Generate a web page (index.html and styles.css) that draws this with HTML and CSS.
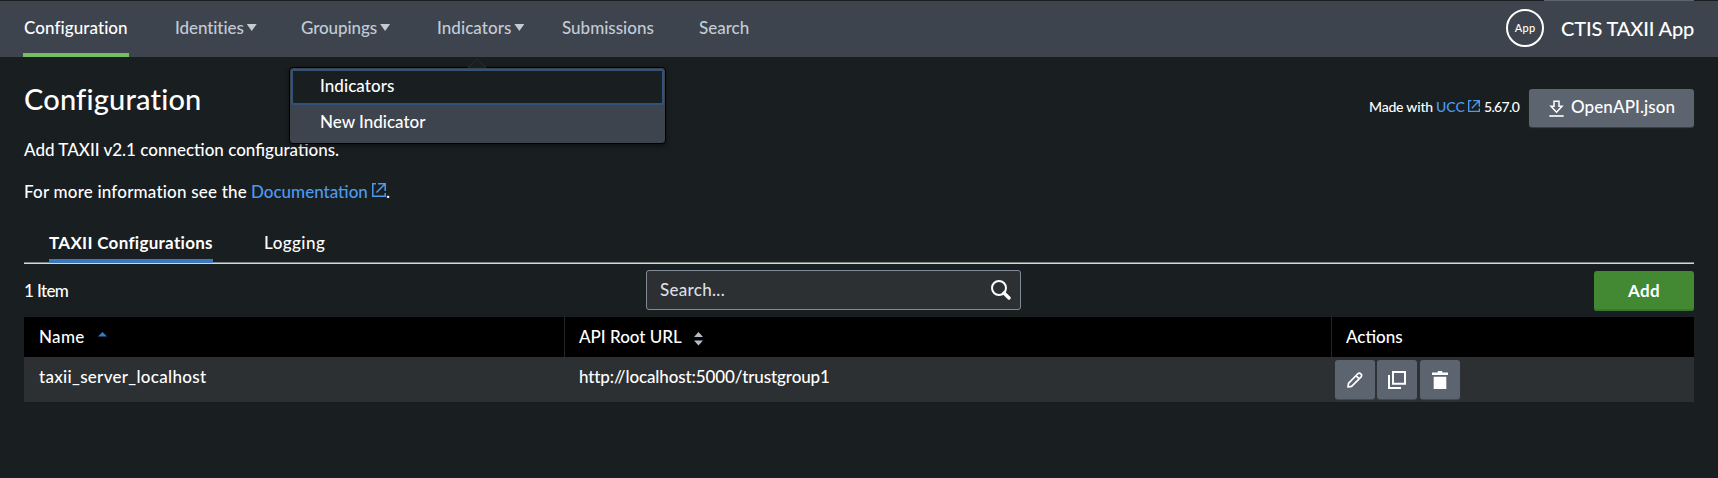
FILE: index.html
```html
<!DOCTYPE html>
<html lang="en">
<head>
<meta charset="utf-8">
<title>CTIS TAXII App</title>
<link rel="stylesheet" href="styles.css">
</head>
<body>
<header class="bar">
  <nav class="nav">
    <a class="nav-item active w1"><span class="t1">Configuration</span></a>
    <a class="nav-item w2"><span class="t2">Identities</span><i class="caret"></i></a>
    <a class="nav-item w3"><span class="t3">Groupings</span><i class="caret"></i></a>
    <div class="nav-item w4"><span class="t4">Indicators</span><i class="caret"></i>
      <div class="menu">
        <svg class="notch" width="20" height="10" viewBox="0 0 20 10"><path d="M.5 10L10 .7l9.500 9.300" fill="#191e21" stroke="#2b3034"/></svg>
        <div class="menu-item focused"><span class="t4">Indicators</span></div>
        <div class="menu-item"><span class="t5">New Indicator</span></div>
      </div>
    </div>
    <a class="nav-item w5"><span class="t6">Submissions</span></a>
    <a class="nav-item"><span class="t7">Search</span></a>
  </nav>
  <div class="brand"><div class="logo">App</div><span class="app-name">CTIS TAXII App</span></div>
</header>
<main>
  <div class="head">
    <div class="intro">
      <h1>Configuration</h1>
      <p class="p1">Add TAXII v2.1 connection configurations.</p>
      <p class="p2"><span class="more">For more information see the</span><a class="link doc">Documentation</a><svg class="ext" width="14" height="14" viewBox="0 0 14 14"><path d="M4 .8H.8v12.400h12.400V10M6 .8h7.200V8M4.500 9.500L13 1" fill="none" stroke="#4c9aef" stroke-width="1.500"/></svg><span>.</span></p>
    </div>
    <div class="tools">
      <span class="made">Made with</span><a class="link ucc">UCC</a><svg class="ext-s" width="12" height="12" viewBox="0 0 14 14"><path d="M4 .8H.8v12.400h12.400V10M6 .8h7.200V8M4.500 9.500L13 1" fill="none" stroke="#4c9aef" stroke-width="1.600"/></svg><span class="ver">5.67.0</span>
      <button class="download"><svg width="15" height="17" viewBox="0 0 15 17"><path d="M5 1.200h5v5h3L7.500 12.200 2 6.200h3z" fill="none" stroke="#fff" stroke-width="1.500"/><path d="M.3 16h14.400" stroke="#fff" stroke-width="1.600"/></svg><span class="dl-text">OpenAPI.json</span></button>
    </div>
  </div>
  <div class="tabs"><span class="tab selected"><span>TAXII Configurations</span></span><span class="tab logging">Logging</span></div>
  <div class="controls">
    <span class="count">1 Item</span>
    <div class="search"><span class="ph">Search...</span><svg width="20" height="20" viewBox="0 0 20 20"><circle cx="8" cy="8" r="7" fill="none" stroke="#fff" stroke-width="2"/><path d="M13 13l5 5" stroke="#fff" stroke-width="3.400" stroke-linecap="round"/></svg></div>
    <button class="add">Add</button>
  </div>
  <div class="table">
    <div class="row thead">
      <div class="cell"><span class="c1">Name</span><svg class="s1" width="9" height="5" viewBox="0 0 9 5"><path d="M0 4.500L4.500 0 9 4.500z" fill="#3c78be"/></svg></div>
      <div class="cell"><span class="c2">API Root URL</span><svg class="s2" width="9" height="14" viewBox="0 0 9 14"><path d="M0 5L4.500 0 9 5zM0 8.500h9L4.500 13.500z" fill="#b5bcc8"/></svg></div>
      <div class="cell"><span class="c3">Actions</span></div>
    </div>
    <div class="row">
      <div class="cell"><span class="c4">taxii_server_localhost</span></div>
      <div class="cell"><span class="c5">http://localhost:5000/trustgroup1</span></div>
      <div class="cell actions">
        <button class="act"><svg width="16" height="16" viewBox="0 0 16 16"><path d="M1 15l.5-3.600L10.600 2q1.600-1.600 3.200-.1t.1 3.200L4.600 14.400zM9 3.600l3.300 3.300" fill="none" stroke="#fff" stroke-width="1.700" stroke-linejoin="round"/></svg></button>
        <button class="act copy"><svg width="18" height="18" viewBox="0 0 18 18"><path d="M5 1h12v11.800H5z" fill="none" stroke="#fff" stroke-width="2"/><path d="M1 4v13h12" fill="none" stroke="#fff" stroke-width="2"/></svg></button>
        <button class="act"><svg width="16" height="18" viewBox="0 0 16 18"><path d="M0 1.500h5.500L6 0h4l.5 1.500H16V4H0zM1.700 5.700h12.600V18H1.700z" fill="#fff"/></svg></button>
      </div>
    </div>
  </div>
</main>
</body>
</html>
```
FILE: styles.css
```css
* { box-sizing: border-box; }
body { margin: 0; height: 478px; overflow: hidden; background: #191e21; color: #fff; font: 500 17px/24px Lato, "Open Sans", sans-serif; }
h1, p { margin: 0; }
span { white-space: nowrap; }
button { border: 0; padding: 0; color: #fff; font: inherit; display: flex; align-items: center; justify-content: center; }
.bar { height: 57px; border-top: 1px solid #191e21; background: #3d444e; display: flex; justify-content: space-between; padding: 0 24px 0 23px; }
.nav { display: flex; }
.nav-item { position: relative; display: flex; height: 56px; padding-top: 15px; color: #c3cbd4; }
.active { color: #fff; border-bottom: 4px solid #78bd62; padding-left: 1px; margin-right: 46px; }
.w1 { width: 106px; } .w2 { width: 126px; } .w3 { width: 136px; } .w4 { width: 125px; } .w5 { width: 137px; }
.t1 { letter-spacing: .08px; }
.t2, .t3 { letter-spacing: -.08px; }
.t4 { letter-spacing: .06px; }
.caret { width: 10px; height: 7px; margin: 8px 0 0 3px; background: #c3cbd4; clip-path: polygon(0 0, 100% 0, 50% 100%); }
.menu { position: absolute; left: -148px; top: 66px; width: 377px; height: 77px; border: 1px solid #000; border-radius: 4px; background: #3d444e; color: #fff; box-shadow: 0 2px 5px rgba(0,0,0,.45); z-index: 2; padding: 1px; }
.notch { position: absolute; left: 177px; top: -10px; }
.menu-item { height: 37px; padding: 5px 0 0 29px; }
.focused { background: #191e21; border: 2px solid #30527b; padding: 3px 0 0 27px; height: 36px; border-radius: 2px; }
.brand { display: flex; position: relative; }
.brand::before { content: ""; position: absolute; right: 0; top: -1px; width: 150px; height: 1px; background: #5c6470; }
.logo { width: 38px; height: 38px; margin: 8px 17px 0 0; border: 2px solid #fff; border-radius: 50%; font-size: 11px; font-weight: 500; line-height: 33px; text-align: center; letter-spacing: .3px; }
.app-name { font-size: 20px; margin-top: 15px; width: 133px; letter-spacing: -.15px; }
main { padding: 0 24px; }
.head { display: flex; justify-content: space-between; height: 167px; }
h1 { font-size: 29px; font-weight: 500; line-height: 36px; margin-top: 24px; letter-spacing: .18px; }
.p1 { margin-top: 21px; }
.p2 { margin-top: 18px; display: flex; }
.more { width: 227px; letter-spacing: .2px; }
.doc { width: 121px; }
.link { color: #4c9aef; }
.ext { margin-top: 3px; }
.tools { display: flex; font-size: 14px; padding-top: 32px; }
.tools > span, .tools > a { margin-top: 6px; }
.made { width: 67px; letter-spacing: -.2px; } .ucc { width: 32px; }
.ext-s { margin: 11px 4px 0 0; }
.ver { width: 45px; letter-spacing: -.65px; }
.download { width: 165px; height: 38px; background: #5c6470; border-radius: 3px; box-shadow: 0 1px 1px #3d444e; justify-content: flex-start; padding-left: 20px; font-size: 17px; }
.dl-text { margin-left: 7px; margin-top: -3px; letter-spacing: .1px; }
.tabs { height: 40px; display: flex; padding-left: 25px; border-bottom: 1px solid #d3d7d9; box-shadow: inset 0 -1px #7d8285; }
.tab { height: 39px; padding-top: 7px; }
.selected { width: 164px; border-bottom: 4px solid #3c78be; font-weight: 700; margin-right: 51px; letter-spacing: .3px; }
.logging { letter-spacing: .45px; }
.controls { height: 53px; display: grid; grid-template-columns: 622px 375px 1fr; }
.count { margin-top: 15px; letter-spacing: -.6px; }
.search { height: 40px; margin-top: 6px; background: #2c3033; border: 1px solid #818b98; border-radius: 3px; display: flex; justify-content: space-between; padding: 7px 9px 0 13px; color: #dbdfe2; }
.ph { letter-spacing: .3px; }
.search svg { margin-top: 2px; }
.add { justify-self: end; width: 100px; height: 40px; margin-top: 7px; border-radius: 3px; background: #438832; font-weight: 700; letter-spacing: .3px; box-shadow: inset 0 -2px #3b782c; }
.row { display: grid; grid-template-columns: 540px 767px 1fr; height: 45px; background: #2c3033; }
.thead { height: 40px; background: #000; }
.cell { display: flex; padding: 8px 0 0 15px; }
.thead .cell + .cell { border-left: 1px solid #22272a; padding-left: 14px; }
.c1 { letter-spacing: .35px; }
.c4 { letter-spacing: .3px; }
.c5 { letter-spacing: -.11px; }
.s1 { margin: 7px 0 0 13px; }
.s2 { margin: 7px 0 0 12px; }
.actions { padding: 3px 0 0 4px; }
.act { width: 40px; height: 39px; margin-right: 2px; background: #5c6470; border-radius: 3px; box-shadow: 0 1px 1px #464d57; }
.copy { margin-right: 3px; }
```
